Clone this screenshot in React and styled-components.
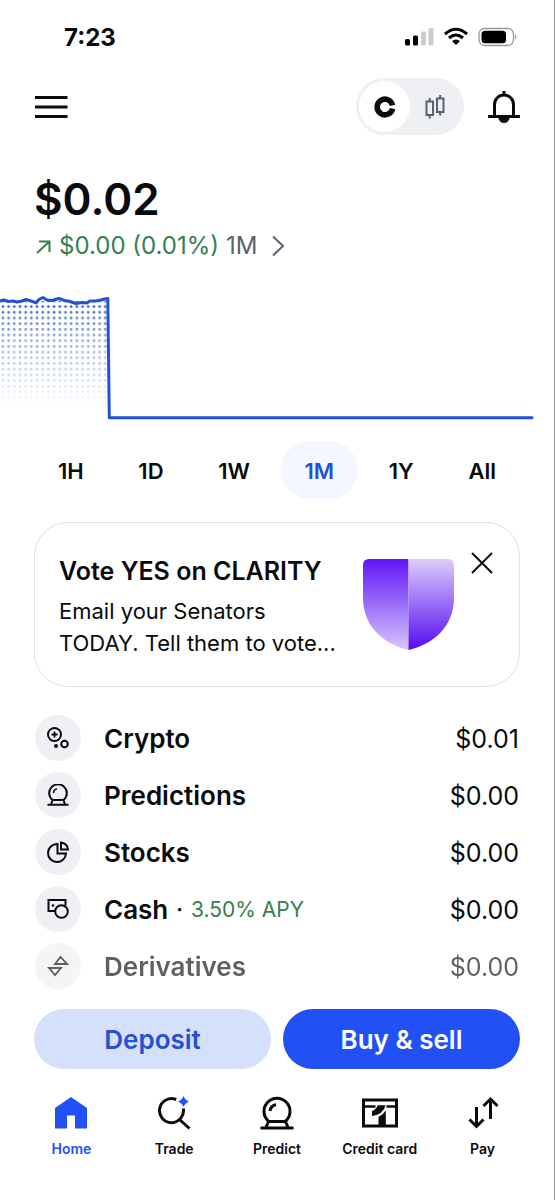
import React, { useId, useState } from 'react';
import styled, { createGlobalStyle } from 'styled-components';

const GlobalStyle = createGlobalStyle`
  * {
    box-sizing: border-box;
  }

  body {
    margin: 0;
    background: #fff;
    color: #0a0b0d;
    font-family: Inter, 'Liberation Sans', sans-serif;
  }
`;

const ranges = ['1H', '1D', '1W', '1M', '1Y', 'All'];

const assets = [
  { name: 'Crypto', value: '$0.01', Icon: CryptoIcon },
  { name: 'Predictions', value: '$0.00', Icon: OrbIcon },
  { name: 'Stocks', value: '$0.00', Icon: PieIcon },
  { name: 'Cash', value: '$0.00', Icon: CashIcon, note: '3.50% APY' },
  { name: 'Derivatives', value: '$0.00', Icon: DerivativesIcon, faded: true },
];

const tabs = [
  { name: 'Home', Icon: HomeIcon },
  { name: 'Trade', Icon: TradeIcon },
  { name: 'Predict', Icon: PredictIcon },
  { name: 'Credit card', Icon: CardIcon },
  { name: 'Pay', Icon: PayIcon },
];

export default function App() {
  const [range, setRange] = useState('1M');
  const [tab, setTab] = useState('Home');

  return (
    <>
      <GlobalStyle />
      <Page>
        <StatusBar>
          <Clock>7:23</Clock>
          <StatusIcons />
        </StatusBar>
        <Header>
          <IconButton aria-label='Menu'>
            <svg width='34' height='32' viewBox='0 0 34 32'>
              <path d='M1 6.5h32.500M1 16h32.500M1 25.5h32.500' stroke='#0a0b0d' strokeWidth='3' />
            </svg>
          </IconButton>
          <HeaderActions>
            <ModeSwitch />
            <IconButton aria-label='Notifications'>
              <BellIcon />
            </IconButton>
          </HeaderActions>
        </Header>
        <Balance>
          <Total>$0.02</Total>
          <Change>
            <svg width='18' height='17' viewBox='0 0 18 17' fill='none' stroke='#35804f' strokeWidth='2'>
              <path d='M3 15L15.5 3.5M5 3.5h10.5V14' />
            </svg>
            <Gain>$0.00 (0.01%)</Gain>
            <span>1M</span>
            <Chevron width='14' height='22' viewBox='0 0 14 22' fill='none' stroke='#5b616e' strokeWidth='2'>
              <path d='M2 1.5L12 11L2 20.5' />
            </Chevron>
          </Change>
        </Balance>
        <Chart />
        <Ranges>
          {ranges.map((name) => (
            <RangeButton key={name} $active={name === range} onClick={() => setRange(name)}>
              {name}
            </RangeButton>
          ))}
        </Ranges>
        <Promo>
          <PromoText>
            <PromoTitle>Vote YES on CLARITY</PromoTitle>
            <PromoBody>
              Email your Senators
              <br />
              TODAY. Tell them to vote...
            </PromoBody>
          </PromoText>
          <ShieldIcon />
          <IconButton aria-label='Dismiss'>
            <svg width='22' height='22' viewBox='0 0 22 22' fill='none' stroke='#0a0b0d' strokeWidth='2'>
              <path d='M1 1l20 20M21 1L1 21' />
            </svg>
          </IconButton>
        </Promo>
        <AssetList>
          {assets.map(({ name, value, note, faded, Icon }) => (
            <AssetRow key={name} $faded={faded}>
              <AssetIcon>
                <Icon />
              </AssetIcon>
              <AssetName>{name}</AssetName>
              {note && (
                <AssetNote>
                  <Dot>·</Dot>
                  {note}
                </AssetNote>
              )}
              <AssetValue>{value}</AssetValue>
            </AssetRow>
          ))}
        </AssetList>
        <Actions>
          <ActionButton>Deposit</ActionButton>
          <ActionButton $primary>Buy &amp; sell</ActionButton>
        </Actions>
        <TabBar>
          {tabs.map(({ name, Icon }) => (
            <TabButton key={name} $active={name === tab} onClick={() => setTab(name)}>
              <Icon />
              {name}
            </TabButton>
          ))}
        </TabBar>
      </Page>
    </>
  );
}

function StatusIcons() {
  return (
    <svg width='112' height='20' viewBox='0 0 112 20'>
      <g fill='#000'>
        <rect x='0' y='12' width='5' height='6.5' rx='1.5' />
        <rect x='8' y='8.5' width='5' height='10' rx='1.5' />
      </g>
      <g fill='#ccc'>
        <rect x='16' y='4.5' width='5' height='14' rx='1.5' />
        <rect x='23.5' y='1' width='5' height='17.5' rx='1.5' />
      </g>
      <g fill='none' stroke='#000' strokeWidth='3'>
        <path d='M40 7Q51 -2.500 62 7' />
        <path d='M44 11Q51 5 58 11' />
      </g>
      <path d='M47 14Q51 11 55 14L51 18Z' />
      <rect x='74' y='1.5' width='34.5' height='17' rx='5.5' fill='none' stroke='#999' strokeWidth='1.3' />
      <rect x='76.500' y='3.8' width='24.5' height='12.4' rx='3.5' />
      <path d='M110 7q2.5 3 0 6z' fill='#999' />
    </svg>
  );
}

function ModeSwitch() {
  return (
    <Switch>
      <SwitchButton $active aria-label='Simple'>
        <svg width='22' height='22' viewBox='0 0 22 22' fill='none'>
          <path d='M18.6 9.3A7.8 7.8 0 1 0 18.6 12.7' stroke='#0a0b0d' strokeWidth='5.6' />
        </svg>
      </SwitchButton>
      <SwitchButton aria-label='Advanced'>
        <svg width='22' height='24' viewBox='0 0 22 24' fill='none' stroke='#5b616e' strokeWidth='2'>
          <path d='M1.5 6.500h6.5v13.500h-6.500zM12 3.500h6.500v13.500h-6.500zM4.700 3v3.500M4.700 20V23.500M15.200 0V3.500M15.200 17v3.500' />
        </svg>
      </SwitchButton>
    </Switch>
  );
}

function BellIcon() {
  return (
    <svg width='32' height='34' viewBox='0 0 32 34' fill='none' stroke='#0a0b0d' strokeWidth='3'>
      <path d='M16 1v5M0 26.5h32M6.5 26V14.5a9.5 9.5 0 0 1 19 0V26' />
      <path d='M10 27h12q-1.5 6-6 6t-6-6z' fill='#0a0b0d' stroke='none' />
    </svg>
  );
}

function Chart() {
  const id = useId();

  return (
    <ChartSvg viewBox='0 0 555 130' fill='none'>
      <defs>
        <pattern id={`${id}dots`} width='5.7' height='5.7' patternUnits='userSpaceOnUse'>
          <circle cx='2.9' cy='4.3' r='1.35' fill='#2f5cd0' />
        </pattern>
        <linearGradient id={`${id}fade`} x1='0' y1='0' x2='0' y2='1'>
          <stop offset='0' stopColor='#fff' />
          <stop offset='0.4' stopColor='#fff' stopOpacity='0.5' />
          <stop offset='1' stopColor='#fff' stopOpacity='0' />
        </linearGradient>
        <mask id={`${id}mask`}>
          <rect y='10' width='109' height='105' fill={`url(#${id}fade)`} />
        </mask>
      </defs>
      <rect y='10' width='108' height='105' fill={`url(#${id}dots)`} mask={`url(#${id}mask)`} />
      <path
        d='M0 10L4 9L8 10.5L13 10L17 11L22 10L26 8.5L31 10L36 12L39 8.5L43 6.5L47 9L52 9.5L59 7.5L65 9.5L70 10.5L76 12.5L82 11.5L87 12L90 10L96 10L101 9L105 8L108 7.5L109.5 127L533 127'
        stroke='#2450d8'
        strokeWidth='3'
        strokeLinejoin='round'
        strokeLinecap='round'
      />
    </ChartSvg>
  );
}

function ShieldIcon() {
  const id = useId();

  return (
    <Shield width='91' height='91' viewBox='0 0 91 91'>
      <defs>
        <linearGradient id={`${id}left`} x1='0' y1='0' x2='0' y2='1'>
          <stop stopColor='#5f16f6' />
          <stop offset='1' stopColor='#d8c6fb' />
        </linearGradient>
        <linearGradient id={`${id}right`} x1='0' y1='0' x2='0' y2='1'>
          <stop stopColor='#dccdfb' />
          <stop offset='1' stopColor='#560af0' />
        </linearGradient>
      </defs>
      <path d='M45.500 0H6Q0 0 0 6V39C0 67 20 85 45.500 91z' fill={`url(#${id}left)`} />
      <path d='M45.500 0H85Q91 0 91 6V39C91 67 71 85 45.500 91z' fill={`url(#${id}right)`} />
    </Shield>
  );
}

function CryptoIcon() {
  return (
    <svg width='22' height='22' viewBox='0 0 22 22' fill='none' stroke='#0a0b0d' strokeWidth='2'>
      <circle cx='7.5' cy='7.5' r='6.5' />
      <circle cx='17.5' cy='17' r='3.3' />
      <circle cx='9' cy='19' r='2' fill='#0a0b0d' stroke='none' />
      <path d='M7.5 4.500v6M4.5 7.500h6' strokeWidth='1.8' />
    </svg>
  );
}

function OrbIcon() {
  return (
    <svg width='22' height='22' viewBox='0 0 22 22' fill='none' stroke='#0a0b0d' strokeWidth='2'>
      <path d='M5.5 16a8.8 8.8 0 1 1 11 0zM5.500 16l-1.500 4.500M16.500 16l1.500 4.500M0.500 20.800h21' />
      <path d='M6.5 9q0-3.500 3.500-4' strokeWidth='1.6' />
    </svg>
  );
}

function PieIcon() {
  return (
    <svg width='22' height='22' viewBox='0 0 22 22' fill='none' stroke='#0a0b0d' strokeWidth='2'>
      <path d='M10.500 3a9 9 0 1 0 8.500 9.500h-8.500zM14 1.500q6.500 1 7 7h-7z' />
    </svg>
  );
}

function CashIcon() {
  return (
    <svg width='22' height='22' viewBox='0 0 22 22' fill='none' stroke='#0a0b0d' strokeWidth='2'>
      <path d='M8 13H1.500V2h17v5.500' />
      <circle cx='14.500' cy='13.5' r='6.3' />
      <circle cx='6' cy='7.5' r='1.3' fill='#0a0b0d' stroke='none' />
    </svg>
  );
}

function DerivativesIcon() {
  return (
    <svg width='22' height='22' viewBox='0 0 22 22' fill='none' stroke='#0a0b0d' strokeWidth='1.8'>
      <path d='M8 9h12L13.500 2zM2 13h12L8 20z' />
    </svg>
  );
}

function HomeIcon() {
  return (
    <svg width='34' height='34' viewBox='0 0 34 34'>
      <path d='M17 1L33 12V32.500H21V19.500H13V32.500H1V12z' fill='#2151f5' />
    </svg>
  );
}

function TradeIcon() {
  return (
    <svg width='34' height='34' viewBox='0 0 34 34' fill='none'>
      <path d='M19.200 3.600A12 12 0 1 0 26.300 12.500M22.500 23.500L32.500 32.500' stroke='#0a0b0d' strokeWidth='3' />
      <path d='M26.500 0q1.500 4 5.500 5.500q-4 1.500-5.500 5.500q-1.500-4-5.500-5.500q4-1.500 5.500-5.500z' fill='#2151f5' />
    </svg>
  );
}

function PredictIcon() {
  return (
    <svg width='34' height='34' viewBox='0 0 34 34' fill='none' stroke='#0a0b0d' strokeWidth='3'>
      <path d='M9 25.500a13 13 0 1 1 16 0zM8.500 25.500l-2.500 6M25.500 25.500l2.500 6M0.500 32h33' />
      <path d='M10 15q0.500-5 6-6.500' />
    </svg>
  );
}

function CardIcon() {
  return (
    <svg width='36' height='34' viewBox='0 0 36 34' fill='none'>
      <path d='M1.500 4H34.500V30H1.500z' stroke='#0a0b0d' strokeWidth='3' />
      <path d='M2 10.500H13.500M24.500 10.500H34' stroke='#0a0b0d' strokeWidth='2.5' />
      <path d='M10 20v-5q4.500-1.500 5.500-5.700h8Q21.500 18.500 10 20zM16.500 29v-8q4.500-2 7.300-6.500V29z' fill='#0a0b0d' />
    </svg>
  );
}

function PayIcon() {
  return (
    <svg width='34' height='34' viewBox='0 0 34 34' fill='none' stroke='#0a0b0d' strokeWidth='3'>
      <path d='M10.500 11v20M3.500 23.500l7 7l7-7M24.500 23V3M17.500 10l7-7l7 7' />
    </svg>
  );
}

const Page = styled.main`
  display: flex;
  flex-direction: column;
  min-height: 100vh;
  border-right: 1px solid #999;
`;

const StatusBar = styled.div`
  display: flex;
  align-items: center;
  justify-content: space-between;
  height: 74px;
  padding: 0 37px 0 64px;
`;

const Clock = styled.time`
  font-size: 24px;
  font-weight: 700;
`;

const Header = styled.header`
  display: flex;
  align-items: center;
  justify-content: space-between;
  padding: 4px 34px 0;
`;

const HeaderActions = styled.div`
  display: flex;
  align-items: center;
  gap: 24px;
`;

const IconButton = styled.button`
  display: flex;
  flex: none;
  padding: 0;
  border: 0;
  background: none;
  cursor: pointer;
`;

const Switch = styled.div`
  display: flex;
  padding: 3px;
  border-radius: 29px;
  background: #eef0f4;
`;

const SwitchButton = styled.button`
  display: flex;
  align-items: center;
  justify-content: center;
  width: 51px;
  height: 51px;
  padding: 0;
  border: 0;
  border-radius: 50%;
  background: ${({ $active }) => ($active ? '#fff' : 'transparent')};
  cursor: pointer;
`;

const Balance = styled.section`
  padding: 37px 34px 0;
`;

const Total = styled.h1`
  margin: 0;
  font-size: 44px;
  font-weight: 600;
  line-height: 54px;
`;

const Change = styled.div`
  display: flex;
  align-items: center;
  gap: 7px;
  color: #5b616e;
  font-size: 24px;
  line-height: 40px;
`;

const Gain = styled.span`
  color: #35804f;
`;

const Chevron = styled.svg`
  margin-left: 6px;
`;

const ChartSvg = styled.svg`
  display: block;
  width: 100%;
  margin-top: 25px;
`;

const Ranges = styled.div`
  display: flex;
  justify-content: space-between;
  padding: 20px 34px 0;
`;

const RangeButton = styled.button`
  height: 58px;
  padding: 2px 24px 0;
  border: 0;
  border-radius: 29px;
  background: ${({ $active }) => ($active ? '#f4f7ff' : 'none')};
  color: ${({ $active }) => ($active ? '#2450d8' : '#0a0b0d')};
  font: inherit;
  font-size: 22px;
  font-weight: 600;
  cursor: pointer;
`;

const Promo = styled.section`
  display: flex;
  align-items: flex-start;
  height: 165px;
  margin: 23px 34px 0;
  padding: 29px 26px 0 24px;
  border: 1px solid #dee1e7;
  border-radius: 34px;
`;

const PromoText = styled.div`
  flex: 1;
  padding-top: 2px;
  white-space: nowrap;
`;

const PromoTitle = styled.h2`
  margin: 0;
  font-size: 25px;
  font-weight: 600;
  line-height: 34px;
`;

const PromoBody = styled.p`
  margin: 7px 0 0;
  font-size: 22px;
  line-height: 32px;
`;

const Shield = styled.svg`
  flex: none;
  margin: 7px 17px 0 0;
`;

const AssetList = styled.ul`
  display: flex;
  flex-direction: column;
  gap: 11px;
  margin: 28px 0 0;
  padding: 0 35px;
  list-style: none;
`;

const AssetRow = styled.li`
  display: flex;
  align-items: center;
  height: 46px;
  font-size: 25px;
  line-height: 32px;
  opacity: ${({ $faded }) => ($faded ? 0.65 : 1)};
`;

const AssetIcon = styled.span`
  display: flex;
  align-items: center;
  justify-content: center;
  width: 46px;
  height: 46px;
  margin-right: 23px;
  border-radius: 50%;
  background: #eef0f4;
`;

const AssetName = styled.span`
  padding-top: 2px;
  font-size: 26px;
  font-weight: 600;
`;

const AssetNote = styled.span`
  padding-top: 2px;
  color: #35804f;
  font-size: 21px;
`;

const Dot = styled.span`
  margin: 0 8px;
  color: #0a0b0d;
  font-weight: 600;
`;

const AssetValue = styled.span`
  margin-left: auto;
  padding-top: 2px;
`;

const Actions = styled.div`
  display: grid;
  grid-template-columns: 1fr 1fr;
  gap: 12px;
  padding: 20px 34px 0;
`;

const ActionButton = styled.button`
  height: 60px;
  padding: 2px 0 0;
  border: 0;
  border-radius: 30px;
  background: ${({ $primary }) => ($primary ? '#2151f5' : '#d5e0fc')};
  color: ${({ $primary }) => ($primary ? '#fff' : '#2450d8')};
  font: inherit;
  font-size: 26px;
  font-weight: 600;
  cursor: pointer;
`;

const TabBar = styled.nav`
  display: grid;
  grid-template-columns: repeat(5, 1fr);
  padding: 27px 20px 0;
`;

const TabButton = styled.button`
  display: flex;
  flex-direction: column;
  align-items: center;
  gap: 9px;
  padding: 0;
  border: 0;
  background: none;
  color: ${({ $active }) => ($active ? '#2151f5' : '#0a0b0d')};
  font: inherit;
  font-size: 14px;
  font-weight: 600;
  line-height: 20px;
  cursor: pointer;
`;
